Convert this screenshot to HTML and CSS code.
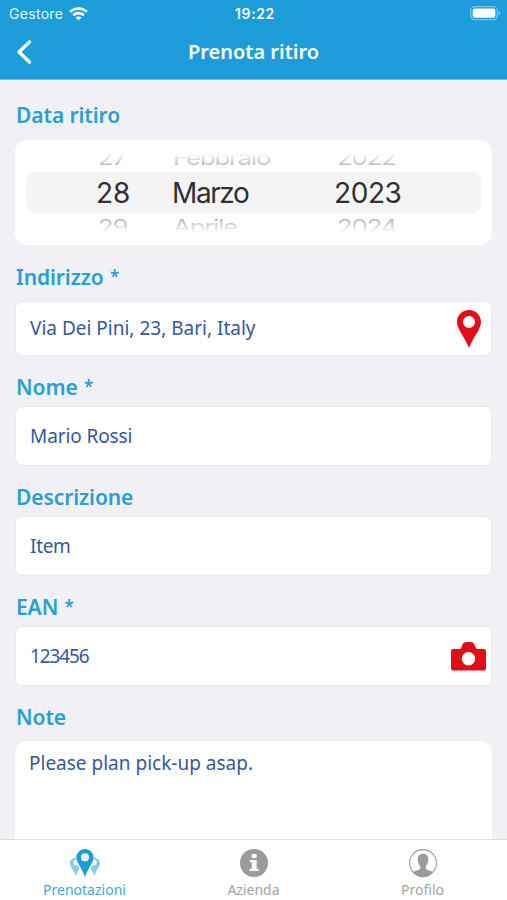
FILE: index.html
```html
<!DOCTYPE html>
<html lang="it">
<head>
<meta charset="utf-8">
<title>Prenota ritiro</title>
<link rel="stylesheet" href="styles.css">
</head>
<body>
<div class="app">
  <header class="header">
    <div class="status">
      <div class="carrier"><span>Gestore</span>
        <svg width="19" height="14" viewBox="0 0 19 14" fill="none" stroke="#fff" stroke-width="2.6"><path d="M1 4.900C5.700.3 13.300.3 18 4.900M4.200 8.200c3-2.800 7.600-2.800 10.600 0"/><path d="M6.600 10.500c1.600-1.500 4.200-1.500 5.800 0L9.500 13.500z" fill="#fff" stroke="none"/></svg>
      </div>
      <span class="time">19:22</span>
      <svg class="battery" width="31" height="15" viewBox="0 0 31 15"><rect x=".7" y=".7" width="26.600" height="13" rx="4" fill="none" stroke="#79c5eb" stroke-width="1.200"/><rect x="2.700" y="2.600" width="22.600" height="9.200" rx="2" fill="#fff"/><path d="M28.600 5v4.400q1.600-.6 1.600-2.200T28.600 5z" fill="#79c5eb"/></svg>
    </div>
    <div class="nav">
      <svg class="back" width="16" height="24" viewBox="0 0 16 24" fill="none" stroke="#fff" stroke-width="3.300" stroke-linecap="round" stroke-linejoin="round"><path d="M13.500 2 3 12l10.500 10"/></svg>
      <h1>Prenota ritiro</h1>
    </div>
  </header>
  <main class="form">
    <div class="label">Data ritiro</div>
    <div class="picker">
      <div class="row prev"><span>27</span><span>Febbraio</span><span>2022</span></div>
      <div class="row current"><span>28</span><span>Marzo</span><span>2023</span></div>
      <div class="row next"><span>29</span><span>Aprile</span><span>2024</span></div>
    </div>
    <div class="label first">Indirizzo <span class="star">*</span></div>
    <div class="field short"><span>Via Dei Pini, 23, Bari, Italy</span>
      <svg class="pin" width="24" height="38" viewBox="0 0 24 38"><path fill="#e30d18" fill-rule="evenodd" d="M12 0C5.300 0 0 5.200 0 12c0 7 7 14 12 26 5-12 12-19 12-26C24 5.200 18.700 0 12 0zm0 6a6 6 0 1 1 0 12 6 6 0 0 1 0-12z"/></svg>
    </div>
    <div class="label">Nome <span class="star">*</span></div>
    <div class="field"><span class="name">Mario Rossi</span></div>
    <div class="label">Descrizione</div>
    <div class="field"><span class="item">Item</span></div>
    <div class="label">EAN <span class="star">*</span></div>
    <div class="field"><span class="code">123456</span>
      <svg class="camera" width="35" height="29" viewBox="0 0 35 29"><path fill="#e30d18" fill-rule="evenodd" d="M2 7h6.500q1.200 0 1.700-1.200L11.500 2.500Q12.500 0 15 0h5q2.500 0 3.500 2.500l1.300 3.300Q25.300 7 26.500 7H33q2 0 2 2v17.500q0 2-2 2H2q-2 0-2-2V9q0-2 2-2zm15.500 3a6.700 6.700 0 1 0 0 13.400 6.700 6.700 0 0 0 0-13.400z"/></svg>
    </div>
    <div class="label last">Note</div>
    <div class="notes">Please plan pick-up asap.</div>
  </main>
  <nav class="tabs">
    <div class="tab active">
      <svg width="32" height="29" viewBox="0 0 32 29"><g fill="#8ecbea"><path d="M7 8.500C3.500 9 1 11 1 14c0 4 3.700 7 5.700 13 1.200-3.400 2.800-5.500 3.800-7.500L8.500 16c-2.500 1-4.500-1-4-3.200.3-1.500 1.500-2.300 3-2.300z"/><path d="M25 8.500c3.500.5 6 2.500 6 5.500 0 4-3.700 7-5.700 13-1.200-3.400-2.800-5.500-3.800-7.500l2-3.500c2.500 1 4.500-1 4-3.200-.3-1.500-1.500-2.300-3-2.300z"/></g><path fill="#1c9dd9" fill-rule="evenodd" d="M16 0C11.300 0 7.400 3.700 7.400 8.300 7.400 14 13 19 16 28c3-9 8.600-14 8.600-19.700C24.600 3.700 20.700 0 16 0zm0 4.300a4 4 0 1 1 0 8 4 4 0 0 1 0-8z"/></svg>
      <span>Prenotazioni</span>
    </div>
    <div class="tab">
      <svg width="32" height="29" viewBox="0 0 32 29"><circle cx="16" cy="14" r="14" fill="#9b9b9b"/><path fill="#fff" d="M13.600 5h5v4h-5zM11.800 11h6.800v8.700h2V22h-9v-2.300h2.200v-6.400h-2z"/></svg>
      <span>Azienda</span>
    </div>
    <div class="tab">
      <svg width="32" height="29" viewBox="0 0 32 29"><circle cx="16" cy="14" r="13.400" fill="#fff" stroke="#9b9b9b" stroke-width="1.100"/><path fill="#9b9b9b" d="M16 4.700c-3.800 0-5.500 2.600-5.300 5.700 0 1 .1 1.600.4 2.300.4 2.200 1.200 3.500 2.200 4.500 0 2.200-.2 3-1.800 3.800-2 .9-4.500 1.300-6 2.300a13.800 13.800 0 0 0 21 0c-1.500-1-4-1.400-6-2.300-1.600-.8-1.800-1.600-1.800-3.800 1-1 1.800-2.300 2.200-4.500.3-.7.4-1.300.4-2.300.2-3.100-1.500-5.700-5.300-5.700z"/></svg>
      <span>Profilo</span>
    </div>
  </nav>
</div>
</body>
</html>
```
FILE: styles.css
```css
* { box-sizing: border-box; }
body { margin: 0; background: #f0f0f5; font-family: "Noto Sans", sans-serif; }
.app { width: 507px; height: 900px; display: flex; flex-direction: column; overflow: hidden; }

.header { height: 80px; flex: none; background: #1c9dd9; border-bottom: 1px solid #69c3ee; color: #fff; }
.status { height: 27px; display: grid; grid-template-columns: 1fr auto 1fr; align-items: center; padding: 0 6px 0 9px; font-family: Inter, sans-serif; font-size: 14px; }
.carrier { display: flex; align-items: center; gap: 6px; letter-spacing: .3px; color: #e3f5ff; }
.time { font-weight: 600; letter-spacing: .6px; }
.battery { justify-self: end; }
.nav { height: 50px; display: grid; grid-template-columns: 40px 1fr 40px; align-items: center; padding: 0 16px; }
h1 { margin: 0; text-align: center; font-size: 20px; font-weight: 600; line-height: 28px; }

.form { flex: 1; min-height: 0; overflow: hidden; padding: 20px 15px 0; }
.label { height: 30px; margin: 0 0 4px 1px; line-height: 30px; font-size: 21px; font-weight: 600; letter-spacing: -.1px; color: #289fd6; }
.label:first-child { margin-bottom: 10px; }
.first, .last { margin-bottom: 9px; }
.star { margin-left: 1px; font-size: 17px; line-height: 1; vertical-align: 2px; }
.picker { height: 105px; padding: 13px 11px; border-radius: 12px; background: #fff; margin-bottom: 17px; font-family: Inter, sans-serif; color: #303032; overflow: hidden; }
.row { display: grid; grid-template-columns: 146px 162px 1fr; white-space: nowrap; }
.row span:first-child { padding-left: 70px; }
.current { height: 41px; line-height: 42px; border-radius: 9px; background: #f4f4f5; font-size: 28px; }
.current span:nth-child(2) { letter-spacing: -1.4px; }
.current span:last-child { letter-spacing: -.4px; }
.prev, .next { font-size: 26px; line-height: 26px; letter-spacing: -1.3px; color: #b5b5b7; overflow: hidden; }
.prev span, .next span { transform: scaleY(.75); padding-left: 1px; }
.prev span:first-child, .next span:first-child { padding-left: 72px; }
.prev span:last-child, .next span:last-child { padding-left: 3px; }
.prev { height: 19px; -webkit-mask-image: linear-gradient(transparent, #000 70%); mask-image: linear-gradient(transparent, #000 70%); }
.prev span { margin-top: -8px; }
.next { height: 20px; -webkit-mask-image: linear-gradient(#000 30%, transparent); mask-image: linear-gradient(#000 30%, transparent); }
.next span { margin-top: 1px; }

.field { height: 60px; margin-bottom: 16px; padding: 0 5px 0 14px; display: flex; align-items: center; justify-content: space-between; background: #fff; border: 1px solid #e8e8ed; border-radius: 7px; }
.field, .notes { font-size: 19px; line-height: 28px; color: #35589e; }
.short { height: 55px; }
.short span { margin-top: -1px; }
.name { letter-spacing: -.1px; }
.item { letter-spacing: -.3px; }
.code { letter-spacing: -1.1px; }
.pin { margin: 0 5px 0 0; }
.notes { height: 180px; border-radius: 12px; background: #fff; padding: 8px 14px; }

.tabs { height: 61px; flex: none; display: grid; grid-template-columns: repeat(3, 1fr); background: #fff; border-top: 1px solid #dcdce0; }
.tab { display: flex; flex-direction: column; align-items: center; padding-top: 9px; font-size: 14px; line-height: 23px; color: #a4a4a4; }
.active { color: #3ca9dc; }
```
